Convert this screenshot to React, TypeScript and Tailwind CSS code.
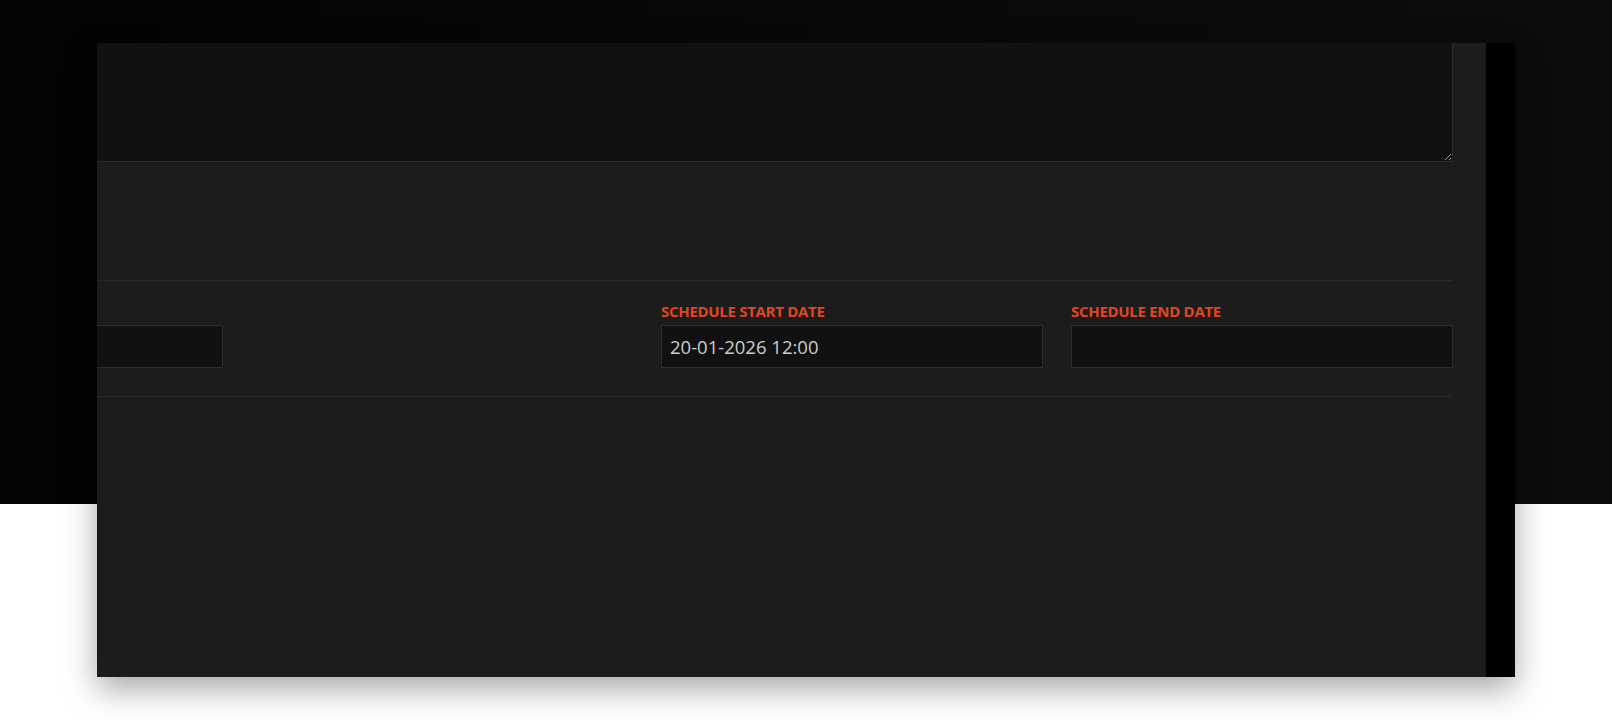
import React from 'react';

interface FieldProps {
  label?: string;
  value?: string;
  cut?: boolean;
}

function DateField({ label, value, cut }: FieldProps) {
  return (
    <div className="flex flex-col">
      <label className="h-5 mb-1 text-[15px] leading-5 font-bold uppercase tracking-[-0.3px] text-[#e2461f] whitespace-nowrap">
        {label ?? ''}
      </label>
      <input
        type="text"
        readOnly
        defaultValue={value ?? ''}
        className={`h-[43px] w-full bg-[#111111] border border-[#2c2c2c] px-2 text-[18.5px] text-[#cccccc] outline-none ${cut ? 'border-l-0' : ''}`}
      />
    </div>
  );
}

export default function App() {
  return (
    <div
      className="h-[720px] w-full overflow-hidden bg-white bg-[linear-gradient(90deg,#030303,#080808_50%,#0c0c0c)] bg-no-repeat bg-[length:100%_504px] pt-[43px] pl-[97px]"
      style={{ fontFamily: '"Open Sans", "Liberation Sans", sans-serif' }}
    >
      <div className="flex w-[1418px] h-[634px] shadow-[0_12px_30px_rgba(0,0,0,0.35)]">
        {/* form body, scrolled sideways and down */}
        <div className="w-[1389px] h-full bg-[#1c1c1c] overflow-hidden pr-[33px]">
          <textarea
            readOnly
            className="block w-full h-[119px] bg-[#111111] border border-t-0 border-l-0 border-[#2c2c2c] resize-y outline-none [color-scheme:dark]"
          />
          <div className="h-[118px]" />
          <div className="border-t border-[#2a2a2a]" />
          <div className="grid grid-cols-[126px_382px_382px_382px] gap-x-[28px] pt-5 pb-[28px]">
            <DateField cut />
            <div />
            <DateField label="Schedule start date" value="20-01-2026 12:00" />
            <DateField label="Schedule end date" />
          </div>
          <div className="border-t border-[#2a2a2a]" />
        </div>
        {/* scrollbar track */}
        <div className="w-[29px] h-full bg-black" />
      </div>
    </div>
  );
}
